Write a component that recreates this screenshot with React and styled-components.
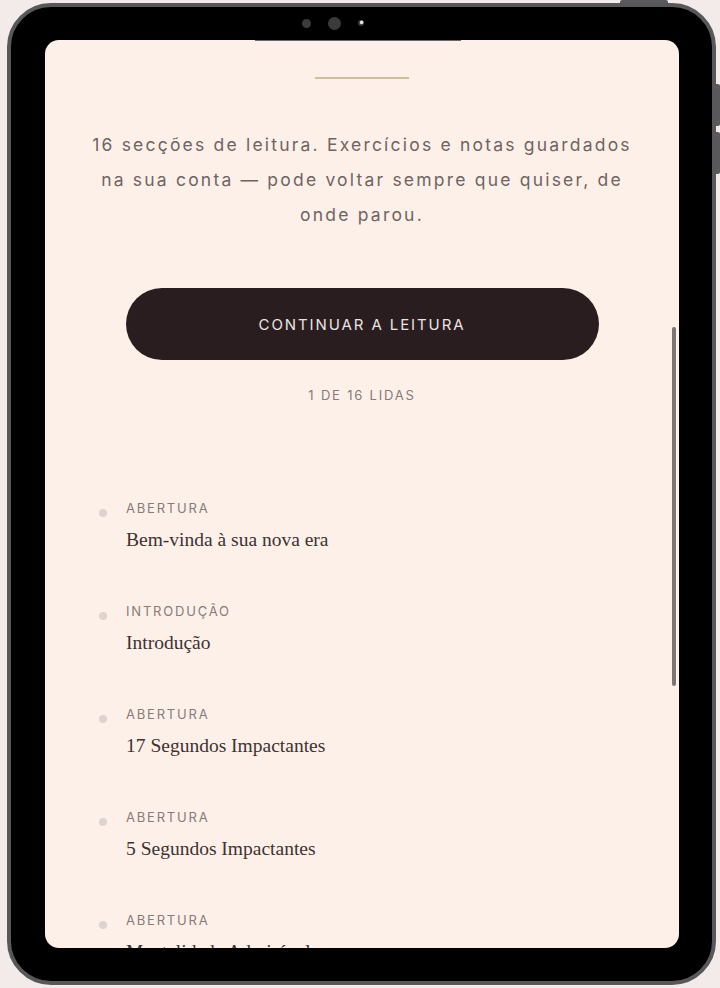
import React from 'react'
import styled, { createGlobalStyle } from 'styled-components';

const GlobalStyle = createGlobalStyle`
  html, body {
    margin: 0;
    padding: 0;
    background: #f2ebea;
  }
  body {
    font-family: Inter, "Noto Sans", sans-serif;
  }
`;

const sections = [
  { id: 1, kind: 'ABERTURA', title: 'Bem-vinda à sua nova era' },
  { id: 2, kind: 'INTRODUÇÃO', title: 'Introdução' },
  { id: 3, kind: 'ABERTURA', title: '17 Segundos Impactantes' },
  { id: 4, kind: 'ABERTURA', title: '5 Segundos Impactantes' },
  { id: 5, kind: 'ABERTURA', title: 'Mentalidade Admirável' },
  { id: 6, kind: 'ABERTURA', title: 'O seu primeiro passo' },
];

function App() {
  return (
    <Page>
      <GlobalStyle />
      <Tablet>
        <TopButton />
        <SideButton $top={77} />
        <SideButton $top={125} />
        <Cameras>
          <Lens $size={9} />
          <Lens $size={13} />
          <Lens $size={6} $glint />
        </Cameras>
        <Screen>
          <Notch />
          <Content>
            <Divider />
            <Intro>
              16 secções de leitura. Exercícios e notas guardados na sua conta — pode voltar sempre que quiser, de onde parou.
            </Intro>
            <ContinueButton>CONTINUAR A LEITURA</ContinueButton>
            <Progress>1 DE 16 LIDAS</Progress>
            <SectionList>
              {sections.map((s) => (
                <SectionItem key={s.id}>
                  <Dot />
                  <SectionText>
                    <Kind>{s.kind}</Kind>
                    <Title>{s.title}</Title>
                  </SectionText>
                </SectionItem>
              ))}
            </SectionList>
          </Content>
          <ScrollThumb />
        </Screen>
      </Tablet>
    </Page>
  )
}

const Page = styled.div`
  width: 720px;
  height: 988px;
  padding: 3px 4px 3px 7px;
  box-sizing: border-box;
  overflow: hidden;
`;

const Tablet = styled.div`
  position: relative;
  height: 100%;
  box-sizing: border-box;
  border: 4px solid #58575a;
  border-radius: 44px;
  background: #000;
  padding: 33px 33px 33px 34px;
`;

const TopButton = styled.div`
  position: absolute;
  top: -7px;
  right: 44px;
  width: 48px;
  height: 4px;
  background: #5a595b;
  border-radius: 2px 2px 0 0;
`;

const SideButton = styled.div`
  position: absolute;
  right: -8px;
  top: ${(p) => p.$top}px;
  width: 4px;
  height: 42px;
  background: #5a595b;
  border-radius: 0 2px 2px 0;
`;

const Cameras = styled.div`
  position: absolute;
  top: 9px;
  left: 291px;
  display: flex;
  align-items: center;
  gap: 17px;
  height: 14px;
`;

const Lens = styled.div`
  width: ${(p) => p.$size}px;
  height: ${(p) => p.$size}px;
  border-radius: 50%;
  background: ${(p) => (p.$glint ? 'radial-gradient(circle at 60% 40%, #e6e6e6 0 25%, #3a3a3c 45%)' : '#3b3b3d')};
`;

const Screen = styled.div`
  position: relative;
  height: 100%;
  border-radius: 14px;
  overflow: hidden;
  background: #fdf0e9;
`;

const Notch = styled.div`
  position: absolute;
  top: 0;
  left: 210px;
  width: 206px;
  height: 1px;
  background: #6b6868;
`;

const Content = styled.div`
  display: flex;
  flex-direction: column;
  align-items: center;
  padding-top: 37px;
`;

const Divider = styled.div`
  width: 94px;
  height: 2px;
  background: #cdbf9f;
`;

const Intro = styled.p`
  margin: 48px 0 0;
  width: 556px;
  text-align: center;
  font-size: 17.5px;
  line-height: 35px;
  letter-spacing: 2.2px;
  color: #6f6463;
`;

const ContinueButton = styled.button`
  margin-top: 56px;
  width: 473px;
  height: 72px;
  border: none;
  border-radius: 36px;
  background: #2a1d1f;
  color: #ece3e1;
  font-family: Inter, "Noto Sans", sans-serif;
  font-size: 15px;
  letter-spacing: 1.9px;
  cursor: pointer;
`;

const Progress = styled.div`
  margin-top: 25px;
  font-size: 13px;
  line-height: 20px;
  letter-spacing: 1.8px;
  color: #867b79;
`;

const SectionList = styled.ul`
  list-style: none;
  margin: 93px 0 0;
  padding: 0 0 0 54px;
  align-self: stretch;
`;

const SectionItem = styled.li`
  display: flex;
  align-items: flex-start;
  gap: 19px;
  padding-bottom: 47px;
`;

const Dot = styled.span`
  flex: none;
  width: 8px;
  height: 8px;
  margin-top: 11px;
  border-radius: 50%;
  background: #ddd3cf;
`;

const SectionText = styled.div`
  display: flex;
  flex-direction: column;
  gap: 8px;
`;

const Kind = styled.span`
  font-size: 13px;
  line-height: 20px;
  letter-spacing: 1.8px;
  color: #867b79;
`;

const Title = styled.span`
  font-family: "Liberation Serif", serif;
  font-size: 19.5px;
  line-height: 28px;
  color: #3d3232;
`;

const ScrollThumb = styled.div`
  position: absolute;
  right: 3px;
  top: 287px;
  width: 4px;
  height: 359px;
  border-radius: 2px;
  background: #7d7573;
`;

export default App
